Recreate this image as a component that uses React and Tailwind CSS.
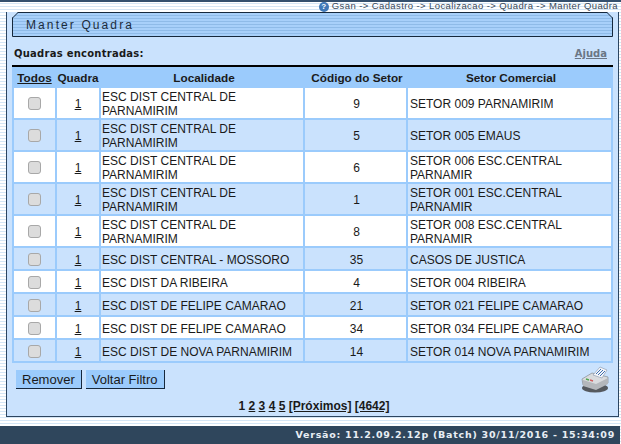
const rows = [
  { localidade: "ESC DIST CENTRAL DE PARNAMIRIM", codigo: 9, setor: "SETOR 009 PARNAMIRIM", tall: true },
  { localidade: "ESC DIST CENTRAL DE PARNAMIRIM", codigo: 5, setor: "SETOR 005 EMAUS", tall: true },
  { localidade: "ESC DIST CENTRAL DE PARNAMIRIM", codigo: 6, setor: "SETOR 006 ESC.CENTRAL PARNAMIR", tall: true },
  { localidade: "ESC DIST CENTRAL DE PARNAMIRIM", codigo: 1, setor: "SETOR 001 ESC.CENTRAL PARNAMIR", tall: true },
  { localidade: "ESC DIST CENTRAL DE PARNAMIRIM", codigo: 8, setor: "SETOR 008 ESC.CENTRAL PARNAMIR", tall: true },
  { localidade: "ESC DIST CENTRAL - MOSSORO", codigo: 35, setor: "CASOS DE JUSTICA" },
  { localidade: "ESC DIST DA RIBEIRA", codigo: 4, setor: "SETOR 004 RIBEIRA" },
  { localidade: "ESC DIST DE FELIPE CAMARAO", codigo: 21, setor: "SETOR 021 FELIPE CAMARAO" },
  { localidade: "ESC DIST DE FELIPE CAMARAO", codigo: 34, setor: "SETOR 034 FELIPE CAMARAO" },
  { localidade: "ESC DIST DE NOVA PARNAMIRIM", codigo: 14, setor: "SETOR 014 NOVA PARNAMIRIM" },
];

const PrinterIcon = () => (
  <svg width="29" height="27" viewBox="0 0 29 27">
    <ellipse cx="14" cy="22" rx="13" ry="4.5" fill="#55595e" />
    <path d="M1 13 L11 7 L27 11 L27 17 L15 23 L2 19 Z" fill="#d9dbde" stroke="#777c82" strokeWidth="0.6" />
    <path d="M2 14 L15 18 L27 12 L27 18 L15 24 L2 20 Z" fill="#b4b7bb" />
    <path d="M12 9 L19 1 L26 4 L21 12 Z" fill="#f4f6fa" stroke="#8793a8" strokeWidth="0.6" />
    <path d="M15 8 L20 3 M17 9 L22 4 M19 10 L24 5" stroke="#3f6fb0" strokeWidth="1" />
    <path d="M5 13 L8 14" stroke="#4fa64f" strokeWidth="1.5" />
    <path d="M9 14 L12 15" stroke="#d06060" strokeWidth="1.5" />
  </svg>
);

export default function App() {
  return (
    <div className="relative flex h-[444px] w-[621px] flex-col overflow-hidden bg-[repeating-linear-gradient(0deg,#ffffff_0px,#ffffff_2px,#d5e6f5_2px,#d5e6f5_3px)] font-['Liberation_Sans',Arial,sans-serif] text-[12px] text-[#1a1a1a]">
      <div className="h-[2px] bg-[#34506e]" />

      {/* breadcrumb */}
      <div className="flex h-[9px] items-center justify-end gap-[3px] pr-[3px] text-[9.5px] leading-none tracking-[0.4px] text-[#3a4a5a]">
        <span className="flex h-[10px] w-[10px] items-center justify-center rounded-full bg-[#3f78b8] text-[8px] font-bold text-white">?</span>
        <span className="-translate-y-[1px]">Gsan -&gt; Cadastro -&gt; Localizacao -&gt; Quadra -&gt; Manter Quadra</span>
      </div>

      {/* main panel */}
      <div className="mt-[1px] ml-[6px] h-[405px] w-[613px] border-r border-b border-l border-[#2c4560] bg-[#cae2fd] pl-[5px]">
        <div className="relative flex h-[25px] w-[601px] items-center rounded-tl-[4px] border border-[#16283c] bg-[repeating-linear-gradient(0deg,#a8d0fa_0px,#a8d0fa_2px,#8fbbe8_2px,#8fbbe8_3px)] pl-[13px] text-[12px] tracking-[2.1px] text-[#1c2c3c]">
          <svg className="absolute -top-px -left-px" width="6" height="6" viewBox="0 0 6 6">
            <path d="M0 0 H6 L0 6 Z" fill="#cae2fd" />
            <path d="M6 .5 L.5 6" stroke="#16283c" fill="none" />
          </svg>
          <svg className="absolute -top-px -right-px" width="6" height="6" viewBox="0 0 6 6">
            <path d="M0 0 H6 V6 Z" fill="#cae2fd" />
            <path d="M0 .5 L5.5 6" stroke="#16283c" fill="none" />
          </svg>
          Manter Quadra
        </div>

        <div className="flex h-[28px] w-[595px] items-end justify-between pb-[4px]">
          <span className="pl-[2px] font-['DejaVu_Sans',sans-serif] text-[10px] font-bold tracking-[0.25px] text-[#1a1a1a]">Quadras encontradas:</span>
          <a className="font-['DejaVu_Sans',sans-serif] text-[10px] font-bold text-[#6b7685] underline">Ajuda</a>
        </div>

        <table className="w-[601px] table-fixed border-separate border-spacing-x-[2px] border-spacing-y-0 border-t-[2px] border-black bg-[#9bcbfc]">
          <colgroup>
            <col className="w-[41px]" />
            <col className="w-[42px]" />
            <col className="w-[202px]" />
            <col className="w-[101px]" />
            <col className="w-[203px]" />
          </colgroup>
          <thead>
            <tr className="h-[21px] text-center text-[11.75px] font-bold">
              <th className="p-0"><a className="font-bold underline">Todos</a></th>
              <th className="p-0 font-bold">Quadra</th>
              <th className="p-0 pl-[4px] font-bold">Localidade</th>
              <th className="p-0 pl-[3px] font-bold">Código do Setor</th>
              <th className="p-0 pl-[3px] font-bold">Setor Comercial</th>
            </tr>
          </thead>
          <tbody>
            {rows.map((row, i) => {
              const bg = i % 2 === 0 ? "bg-white" : "bg-[#cae2fd]";
              const cell = `border-b-[2px] border-[#9bcbfc] p-0 ${bg}`;
              const textTop = row.tall ? "pt-[1px]" : "pt-[2px]";
              return (
                <tr key={i} className={row.tall ? "h-[32px]" : "h-[23px]"}>
                  <td className={`${cell} text-center`}>
                    <input type="checkbox" disabled className="m-0 inline-block h-[13px] w-[13px] appearance-none rounded-[3px] border border-[#a8a8a8] bg-[#dcdcdc] align-middle" />
                  </td>
                  <td className={`${cell} pt-[2px] text-center`}><a className="underline">1</a></td>
                  <td className={`${cell} ${textTop} pl-[1px] leading-[14px]`}>{row.localidade}</td>
                  <td className={`${cell} pt-[2px] pl-[2px] text-center`}>{row.codigo}</td>
                  <td className={`${cell} ${textTop} pl-[2px] leading-[14px]`}>{row.setor}</td>
                </tr>
              );
            })}
          </tbody>
        </table>

        <div className="flex h-[31px] w-[598px] items-start justify-between pt-[3px] pl-[4px]">
          <div className="flex gap-[4px] pt-[4px]">
            <button className="h-[19px] border-r border-b border-[#16283c] bg-[#9bcbfc] px-[6px] text-[13px] leading-none">Remover</button>
            <button className="h-[19px] border-r border-b border-[#16283c] bg-[#9bcbfc] px-[6px] text-[13px] leading-none">Voltar Filtro</button>
          </div>
          <PrinterIcon />
        </div>

        <div className="w-[604px] pt-[3px] text-center text-[12px] font-bold">
          <span>1 </span>
          <a className="underline">2</a> <a className="underline">3</a> <a className="underline">4</a> <a className="underline">5</a>{" "}
          <a className="underline">[Próximos]</a> <a className="underline">[4642]</a>
        </div>
      </div>

      {/* footer */}
      <div className="absolute right-[1px] bottom-0 left-0 flex h-[18px] items-center justify-end bg-[#2f465c] pr-[5px] font-['DejaVu_Sans',sans-serif] text-[9.5px] font-bold tracking-[0.75px] text-[#e8eef4]">
        Versão: 11.2.09.2.12p (Batch) 30/11/2016 - 15:34:09
      </div>
    </div>
  );
}
